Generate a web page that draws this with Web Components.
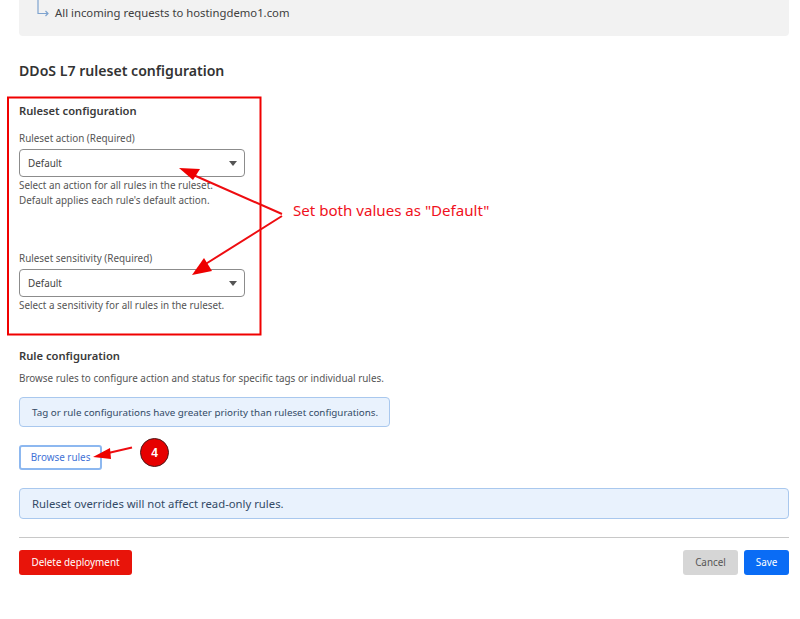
<!DOCTYPE html>
<html lang="en"><head><meta charset="utf-8"><title>DDoS L7 ruleset configuration</title>
<style>
html,body{margin:0;padding:0;background:#fff;height:619px;overflow:hidden}
body{font-family:"Noto Sans","Open Sans",sans-serif;color:#3a3a3a}
</style></head><body>
<config-page></config-page>
<script>
function def(name, html){
  customElements.define(name, class extends HTMLElement{
    constructor(){super();this.attachShadow({mode:'open'}).innerHTML=html;}
  });
}
def('route-box',`<style>
:host{display:flex;align-items:flex-start;height:36px;box-sizing:border-box;background:#f2f2f2;border-radius:0 0 4px 4px;padding:5px 0 0 18px;font-size:11.3px;line-height:16px;color:#404040;gap:6px}
svg{display:block;flex:none;margin-top:-5px}
</style><svg width="12" height="17" viewBox="0 0 12 17" fill="none" stroke="#7ea3cf" stroke-width="1.2"><path d="M1 0V13.5H11M8.5 11L11 13.5L8.5 16"/></svg><span><slot></slot></span>`);
def('section-title',`<style>
:host{display:block;font-size:14.1px;line-height:20px;font-weight:600;color:#333}
</style><slot></slot>`);
def('sub-title',`<style>
:host{display:block;font-size:11.2px;line-height:16px;font-weight:600;color:#3a3a3a}
</style><slot></slot>`);
def('select-field',`<style>
:host{display:block;width:226px;font-size:9.9px;color:#555}
.l{line-height:15px;height:15px}
.s{box-sizing:border-box;height:28px;margin-top:3px;border:1px solid #8c8c8c;border-radius:4px;display:flex;align-items:center;justify-content:space-between;padding:0 7px 0 8px;color:#444;background:#fff}
.c{width:0;height:0;border:4px solid transparent;border-top:5px solid #555;border-bottom:0}
.h{margin-top:0;padding-top:1px;line-height:15px;white-space:nowrap}
</style><div class="l"><slot name="label"></slot></div><div class="s"><span><slot name="value"></slot></span><span class="c"></span></div><div class="h"><slot></slot></div>`);
def('info-note',`<style>
:host{display:block;box-sizing:border-box;background:#e9f2fd;border:1px solid #a9c8ee;border-radius:4px;color:#334a66;padding:0 12px;display:flex;align-items:center;white-space:nowrap}
</style><span><slot></slot></span>`);
def('ui-button',`<style>
:host{display:inline-flex;align-items:center;justify-content:center;box-sizing:border-box;height:25px;padding-bottom:2px;border-radius:3px;font-size:9.9px;white-space:nowrap}
:host([kind=danger]){background:#e8140a;color:#fff;width:113px}
:host([kind=plain]){background:#d6d6d6;color:#555;width:55px}
:host([kind=primary]){background:#0a6cf5;color:#fff;width:45px}
:host([kind=outline]){background:#fff;color:#3f72d6;border:2px solid #8db8f0;width:83px}
</style><slot></slot>`);
def('annotation-layer',`<style>
:host{position:absolute;left:0;top:0;width:800px;height:619px;pointer-events:none;display:block}
svg{position:absolute;left:0;top:0}
.t{position:absolute;left:293px;top:200px;font-family:"Noto Sans",sans-serif;font-size:15.1px;line-height:20px;color:#f01020;white-space:nowrap}
.n{position:absolute;left:140px;top:438px;width:29px;height:29px;box-sizing:border-box;border-radius:50%;background:#e60000;border:1px solid #4a1a1a;display:flex;align-items:center;justify-content:center;color:#fff;font:700 12px "Liberation Sans",sans-serif}
</style>
<svg width="800" height="619" viewBox="0 0 800 619" fill="none">
<rect x="8" y="97.5" width="252.5" height="237" stroke="#f00000" stroke-width="2"/>
<path d="M282 214L190 173.5M282 216L204 265" stroke="#ee0c10" stroke-width="2"/>
<path d="M179 168L200 169L193 180Z" fill="#ee0000"/>
<path d="M192 275L204 258L212 271Z" fill="#ee0000"/>
<path d="M132 447.5L104 454" stroke="#ee0c10" stroke-width="2"/>
<path d="M93 457L110 448L111 459Z" fill="#ee0000"/>
</svg>
<div class="t"><slot name="text"></slot></div><div class="n"><slot name="num"></slot></div>`);
def('config-page',`<style>
:host{display:block;position:relative;width:800px;height:619px;box-sizing:border-box;padding:0 11px 0 19px}
section-title{margin-top:25px}
.cfg{display:block;margin-top:22px}
sub-title.first{margin-top:0}
select-field.a{margin-top:12px}
select-field.b{margin-top:43px}
.rc{margin-top:35px}
.desc{font-size:9.9px;line-height:15px;color:#555;margin-top:7px}
info-note.n1{width:371px;height:30px;margin-top:11px;font-size:9.8px}
.browse{margin-top:18px;display:flex}
info-note.n2{height:31px;margin-top:18px;font-size:11.3px}
hr{border:0;border-top:1px solid #c8c8c8;margin:18px 0 12px}
.foot{display:flex;align-items:center;gap:6px}
.sp{flex:1}
</style>
<route-box>All incoming requests to hostingdemo1.com</route-box>
<section-title>DDoS L7 ruleset configuration</section-title>
<div class="cfg">
<sub-title class="first">Ruleset configuration</sub-title>
<select-field class="a"><span slot="label">Ruleset action (Required)</span><span slot="value">Default</span>Select an action for all rules in the ruleset.<br>Default applies each rule's default action.</select-field>
<select-field class="b"><span slot="label">Ruleset sensitivity (Required)</span><span slot="value">Default</span>Select a sensitivity for all rules in the ruleset.</select-field>
</div>
<sub-title class="rc">Rule configuration</sub-title>
<div class="desc">Browse rules to configure action and status for specific tags or individual rules.</div>
<info-note class="n1">Tag or rule configurations have greater priority than ruleset configurations.</info-note>
<div class="browse"><ui-button kind="outline">Browse rules</ui-button></div>
<info-note class="n2">Ruleset overrides will not affect read-only rules.</info-note>
<hr>
<div class="foot"><ui-button kind="danger">Delete deployment</ui-button><span class="sp"></span><ui-button kind="plain">Cancel</ui-button><ui-button kind="primary">Save</ui-button></div>
<annotation-layer><span slot="text">Set both values as "Default"</span><span slot="num">4</span></annotation-layer>`);
</script>
</body></html>
